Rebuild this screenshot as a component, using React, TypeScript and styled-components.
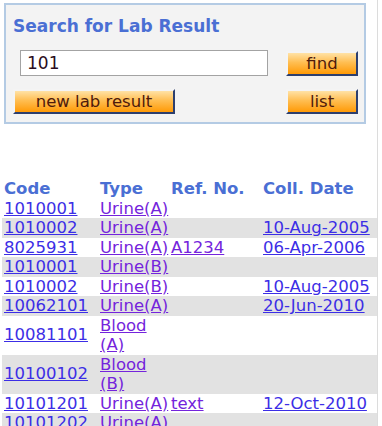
import * as React from "react";
import styled, { createGlobalStyle } from "styled-components";

const GlobalStyle = createGlobalStyle`
  body {
    margin: 0;
    background: #ffffff;
    font-family: "DejaVu Sans", Verdana, sans-serif;
  }
`;

const Page = styled.div`
  width: 378px;
  min-height: 426px;
  border-right: 1px solid #dcdcdc;
  padding: 3px 0 0 4px;
  box-sizing: border-box;
  overflow: hidden;
`;

const SearchPanel = styled.div`
  width: 362px;
  height: 121px;
  box-sizing: border-box;
  border: 2px solid #b4cbe4;
  background: #f3f3f3;
  padding: 10px 6px 0 7px;
`;

const Title = styled.h2`
  margin: 0;
  font-size: 17px;
  font-weight: bold;
  color: #4a6fd4;
  line-height: 22px;
`;

const FormRow = styled.div<{ $indent?: number; $gap?: number }>`
  display: flex;
  align-items: center;
  justify-content: space-between;
  padding-left: ${(p) => p.$indent ?? 0}px;
  margin-top: ${(p) => p.$gap ?? 0}px;
`;

const SearchInput = styled.input`
  width: 248px;
  height: 26px;
  box-sizing: border-box;
  border: 1px solid #a3a3a3;
  background: #fff;
  font-family: "DejaVu Sans", Verdana, sans-serif;
  font-size: 17px;
  color: #2a0c20;
  padding: 0 6px;
  outline: none;
`;

const OrangeButton = styled.button<{ $width: number }>`
  width: ${(p) => p.$width}px;
  height: 25px;
  box-sizing: border-box;
  border: 2px solid;
  border-color: #f4f4f4 #2d3f6e #2d3f6e #f4f4f4;
  background: linear-gradient(#ffe2a6 0%, #ffbe52 45%, #ff9a06 100%);
  font-family: "DejaVu Sans", Verdana, sans-serif;
  font-size: 16.5px;
  color: #4e1a0c;
  padding: 0;
  line-height: 19px;
`;

const ResultTable = styled.table`
  margin-top: 55px;
  margin-left: -2px;
  width: 376px;
  border-collapse: collapse;
  table-layout: fixed;
  font-size: 16.5px;
  line-height: 19.5px;

  th {
    text-align: left;
    font-weight: bold;
    color: #4a6fd4;
    padding: 0 0 0 2px;
    white-space: nowrap;
  }

  td {
    padding: 0 0 0 2px;
    vertical-align: middle;
    overflow: visible;
    white-space: normal;
  }
`;

const Row = styled.tr<{ $shade: boolean }>`
  background: ${(p) => (p.$shade ? "#e2e2e2" : "#ffffff")};
`;

const Link = styled.a<{ $visited?: boolean }>`
  color: ${(p) => (p.$visited ? "#7424dc" : "#3c2ee6")};
  text-decoration: underline;
  white-space: ${(p) => (p.$visited ? "normal" : "nowrap")};
`;

type Result = {
  code: string;
  type: string;
  ref?: string;
  date?: string;
};

const results: Result[] = [
  { code: "1010001", type: "Urine(A)" },
  { code: "1010002", type: "Urine(A)", date: "10-Aug-2005" },
  { code: "8025931", type: "Urine(A)", ref: "A1234", date: "06-Apr-2006" },
  { code: "1010001", type: "Urine(B)" },
  { code: "1010002", type: "Urine(B)", date: "10-Aug-2005" },
  { code: "10062101", type: "Urine(A)", date: "20-Jun-2010" },
  { code: "10081101", type: "Blood (A)" },
  { code: "10100102", type: "Blood (B)" },
  { code: "10101201", type: "Urine(A)", ref: "text", date: "12-Oct-2010" },
  { code: "10101202", type: "Urine(A)" },
];

export default function App() {
  const [query, setQuery] = React.useState("101");

  return (
    <Page>
      <GlobalStyle />
      <SearchPanel>
        <Title>Search for Lab Result</Title>
        <FormRow $indent={7} $gap={13}>
          <SearchInput value={query} onChange={(e) => setQuery(e.target.value)} />
          <OrangeButton $width={72}>find</OrangeButton>
        </FormRow>
        <FormRow $gap={13}>
          <OrangeButton $width={162}>new lab result</OrangeButton>
          <OrangeButton $width={72}>list</OrangeButton>
        </FormRow>
      </SearchPanel>

      <ResultTable>
        <colgroup>
          <col style={{ width: "96px" }} />
          <col style={{ width: "71px" }} />
          <col style={{ width: "92px" }} />
          <col />
        </colgroup>
        <thead>
          <tr>
            <th>Code</th>
            <th>Type</th>
            <th>Ref. No.</th>
            <th>Coll. Date</th>
          </tr>
        </thead>
        <tbody>
          {results.map((r, i) => (
            <Row key={i} $shade={i % 2 === 1}>
              <td>
                <Link href="#">{r.code}</Link>
              </td>
              <td>
                <Link href="#" $visited>
                  {r.type}
                </Link>
              </td>
              <td>{r.ref && <Link href="#" $visited>{r.ref}</Link>}</td>
              <td>{r.date && <Link href="#">{r.date}</Link>}</td>
            </Row>
          ))}
        </tbody>
      </ResultTable>
    </Page>
  );
}
